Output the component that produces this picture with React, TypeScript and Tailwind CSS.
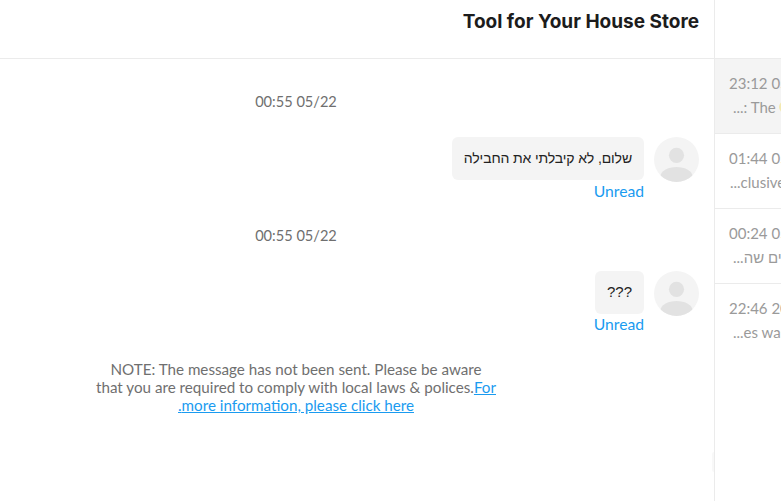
const threads = [
  { time: "23:12 05/21/2023", text: "...: The", emoji: true, active: true, indent: "pl-[18px]" },
  { time: "01:44 05/20/2023", text: "...clusive deals for your home", emoji: false, active: false, indent: "pl-[15px]" },
  { time: "00:24 05/19/2023", text: "...ים שה", emoji: false, active: false, indent: "pl-[18px]" },
  { time: "22:46 20/05/2023", text: "...es was delivered to you", emoji: false, active: false, indent: "pl-[18px]" },
];

function Avatar() {
  return (
    <svg width="45" height="45" viewBox="0 0 45 45" className="shrink-0">
      <defs>
        <clipPath id="avatar-clip">
          <circle cx="22.5" cy="22.5" r="22.5" />
        </clipPath>
      </defs>
      <circle cx="22.5" cy="22.5" r="22.5" fill="#f4f4f4" />
      <circle cx="22.5" cy="18.3" r="7.6" fill="#e2e2e2" />
      <ellipse cx="22.5" cy="39.5" rx="16" ry="9.5" fill="#e2e2e2" clipPath="url(#avatar-clip)" />
    </svg>
  );
}

function Message({ text, size }: { text: string; size: string }) {
  return (
    <div className="flex justify-end gap-[10px] pr-[15px]">
      <div className="flex flex-col items-end">
        <div className={`flex h-[43px] items-center rounded-[6px] bg-[#f4f4f4] px-[12px] font-['Liberation_Sans',sans-serif] text-[#222222] ${size}`}>
          <span dir="rtl">{text}</span>
        </div>
        <span className="mt-[0.6px] text-[15.7px] leading-[20px] text-[#1a9bf0]">Unread</span>
      </div>
      <Avatar />
    </div>
  );
}

function Stamp() {
  return (
    <div className="flex h-[20px] justify-center pr-[122px] text-[14.6px] leading-[20px] text-[#6f6f6f]">
      00:55 05/22
    </div>
  );
}

export default function App() {
  return (
    <div className="relative flex h-[501px] w-[781px] overflow-hidden bg-white font-['Lato',sans-serif]">
      <div className="flex w-[714px] shrink-0 flex-col">
        <div className="flex h-[59px] shrink-0 justify-end border-b border-[#ebebeb] pr-[15px] pt-[10px]">
          <h1 className="font-['Inter',sans-serif] text-[19px] leading-[24px] font-bold text-[#1c1c1c]">Tool for Your House Store</h1>
        </div>
        <div className="flex flex-col pt-[33px]">
          <Stamp />
          <div className="mt-[25px]">
            <Message text="שלום, לא קיבלתי את החבילה" size="text-[14px] tracking-[-0.12px]" />
          </div>
          <div className="mt-[25px]">
            <Stamp />
          </div>
          <div className="mt-[25px]">
            <Message text="???" size="text-[15px]" />
          </div>
          <p dir="rtl" className="mt-[25.8px] ml-[96px] w-[400px] text-center text-[15.2px] leading-[18px] text-[#6f6f6f]">
            NOTE: The message has not been sent. Please be aware that you are required to comply with local laws &amp; polices.
            <a className="text-[#1a9bf0] underline">For more information, please click here.</a>
          </p>
        </div>
      </div>
      <div className="flex min-w-0 flex-1 flex-col border-l border-[#ebebeb]">
        <div className="h-[59px] shrink-0 border-b border-[#ebebeb]" />
        {threads.map((t) => (
          <div
            key={t.time}
            className={`h-[75px] shrink-0 overflow-hidden border-b border-[#ebebeb] pt-[14px] last:border-b-0 ${t.active ? "bg-[#f4f4f4]" : "bg-white"}`}
          >
            <div className="pl-[14px] text-[15px] leading-[20px] whitespace-nowrap text-[#9a9a9a]">{t.time}</div>
            <div className={`mt-[5px] flex items-center text-[15px] leading-[18px] whitespace-nowrap text-[#9a9a9a] ${t.indent}`}>
              {t.text}
              {t.emoji && <span className="ml-[3px] size-[12px] shrink-0 rounded-full bg-[#f3e9b0]" />}
            </div>
          </div>
        ))}
      </div>
      <div className="absolute top-[452px] left-[712px] h-[20px] w-[2px] rounded-l-full bg-[#f8f8f8]" />
    </div>
  );
}
